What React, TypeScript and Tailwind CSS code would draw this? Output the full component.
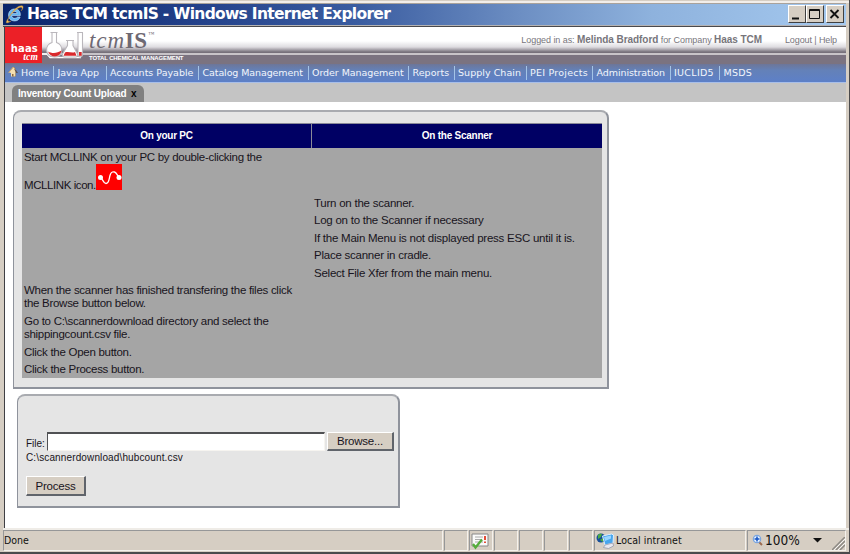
import React from "react";

const SANS = "font-['Liberation_Sans',Arial,sans-serif]";
const VERDANA = "font-['DejaVu_Sans',Verdana,sans-serif]";
const TAHOMA = "font-['DejaVu_Sans_Condensed','DejaVu_Sans',Tahoma,sans-serif]";

function IeLogo() {
  return (
    <svg width="19" height="19" viewBox="0 0 19 19" className="shrink-0">
      <path d="M15.300 10.600H6.700c.1 1.700 1.300 2.700 3 2.700 1.300 0 2.200-.5 2.700-1.300h2.700c-.8 2.500-2.800 3.900-5.500 3.900-3.700 0-6-2.300-6-5.900s2.500-6 6-6c3.900 0 6 2.500 5.700 6.600zM6.800 8.400h5.300c-.2-1.300-1.100-2-2.500-2s-2.500.7-2.800 2z" fill="#63b5f3" stroke="#d5efff" strokeWidth=".6" />
      <path d="M4 12.200C-.2 18 .5 19.400 6 16.200 1.800 17.200 2.400 14.800 5 11 9 5.200 15 1.200 16.700 2.500c.9.7.3 2-.5 3.400C18.600 2.800 18.800.8 16.500.7 13 .6 7.100 5.500 4 12.200z" fill="#f3bc56" stroke="#c48f3a" strokeWidth=".4" />
    </svg>
  );
}

function Flasks() {
  return (
    <svg width="42" height="35" viewBox="0 0 42 35" className="shrink-0">
      <path d="M0 27h5l3 3.500h31" stroke="#fff" strokeWidth="1.500" fill="none" />
      <g fill="#fff" stroke="#bab7bc" strokeWidth="1.100">
        <path d="M8.500 5.500h7M10 6v9.500C2 18 3 30 12.300 30S22 18 14.500 15.500V6" />
        <path d="M24 13.500h8M25.500 14v4.500L20.500 27q-.5 3 2 3h11q2.500 0 2-3L31 18.500V14" />
        <path d="M35 5.500h6M36 6v21q0 3 2.200 3t2.300-3V6" />
      </g>
      <path d="M6 24.500c4 2.200 9 2 13.500-1-1 7.500-11 8-13.500 1z" fill="#d9292c" />
      <path d="M23 25.500c3-1.500 7 1 10-.5l1.500 3.800H21.500z" fill="#d9292c" />
      <path d="M37 25h2.700v3.800H37z" fill="#d9292c" />
    </svg>
  );
}

function HomeIcon() {
  return (
    <svg width="11" height="12" viewBox="0 0 11 12" className="shrink-0">
      <path d="M6.500 1.500 10 7H8v3.500H5V7z" fill="#5b5150" />
      <path d="M1 6.500 5.500 1 7.500 6v4.500H3V7z" fill="#f4dfaf" />
      <path d="M.5 6.800 5.300 1l2 2.500" stroke="#d8a964" fill="none" />
      <path d="M4 8h1.500v2.500H4z" fill="#8a6845" />
    </svg>
  );
}

function LinkIcon() {
  return (
    <svg width="26" height="26" viewBox="0 0 26 26" className="absolute left-[74px] top-[16px]">
      <path fill="#f00" d="M0 0h26v26H0z" />
      <path d="M4 13.500C7 14 7 19.500 10 19.500S13 15 14 11.500 16 7.500 18.500 8 21 12 23 13" fill="none" stroke="#fff" strokeWidth="1.300" />
      <circle cx="4.500" cy="13.500" r="2.500" fill="#fff" />
      <circle cx="23" cy="13.500" r="2.500" fill="#fff" />
    </svg>
  );
}

function CaptionButton({ children, cls }: { children: React.ReactNode; cls: string }) {
  return (
    <div className={`h-[18px] border border-t-white border-l-white border-r-[#404040] border-b-[#404040] bg-[#d6cec3] ${cls}`}>
      <svg width="15" height="16" viewBox="0 0 15 16">{children}</svg>
    </div>
  );
}

const menu = [
  { label: "Java App", cls: "w-[52.5px] tracking-[0px]" },
  { label: "Accounts Payable", cls: "w-[92.500px] tracking-[0px]" },
  { label: "Catalog Management", cls: "w-[109.500px] tracking-[-0.1px]" },
  { label: "Order Management", cls: "w-[100.500px] tracking-[-0.06px]" },
  { label: "Reports", cls: "w-[45.500px] tracking-[0.05px]" },
  { label: "Supply Chain", cls: "w-[72px] tracking-[0.04px]" },
  { label: "PEI Projects", cls: "w-[66.500px] tracking-[0.25px]" },
  { label: "Administration", cls: "w-[77.500px] tracking-[-0.08px]" },
  { label: "IUCLID5", cls: "w-[49.500px] tracking-[0.3px]" },
  { label: "MSDS", cls: "w-[50px] tracking-[0.2px]" },
];

const scannerSteps = [
  "Turn on the scanner.",
  "Log on to the Scanner if necessary",
  "If the Main Menu is not displayed press ESC until it is.",
  "Place scanner in cradle.",
  "Select File Xfer from the main menu.",
];

function Button({ label, cls }: { label: string; cls: string }) {
  return (
    <button className={`flex items-center justify-center border border-t-white border-l-white border-r-2 border-b-2 border-r-[#60646b] border-b-[#60646b] bg-[#d6cec3] text-[11.500px] leading-[14px] tracking-[-0.2px] text-[#181420] ${cls}`}>
      {label}
    </button>
  );
}

function Pane({ cls, children }: { cls: string; children?: React.ReactNode }) {
  return (
    <div className={`flex h-[21px] shrink-0 items-center border border-t-[#969798] border-l-[#969798] border-r-[#f4f1ec] border-b-[#f4f1ec] ${cls}`}>
      {children}
    </div>
  );
}

export default function App() {
  return (
    <div className={`flex h-[554px] w-[850px] flex-col overflow-hidden border-r border-b-2 border-[#4a4a4c] bg-[#d6cec3] whitespace-nowrap ${SANS}`}>
      <div className="h-[3px] shrink-0 border-t border-[#d6cec3] bg-[#f2eeea]" />
      <div className="ml-[3px] mr-[3px] flex h-[22px] shrink-0 items-center border-t border-[#a9a29b] bg-[linear-gradient(90deg,#0a246a_0%,#23418a_23%,#3a5ca0_42%,#6e90c4_62%,#8eb2dd_77%,#a5c9ef_100%)] pr-[2px] pl-[2px]">
        <IeLogo />
        <h1 className={`ml-[3px] flex-1 pb-px text-[15.500px] font-bold leading-[20px] text-white tracking-[-0.7px] ${VERDANA}`}>
          Haas TCM tcmIS - Windows Internet Explorer
        </h1>
        <div className="flex pb-px">
          <CaptionButton cls="w-[18px]"><path d="M3 12.500h7" stroke="#111" strokeWidth="2" /></CaptionButton>
          <CaptionButton cls="w-[18px]"><path d="M2.500 3.500h10v9h-10zM2 4.500h11" stroke="#111" fill="none" /></CaptionButton>
          <CaptionButton cls="ml-[2px] w-[18px]"><path d="m3.500 4 8 8m0-8-8 8" stroke="#111" strokeWidth="1.800" /></CaptionButton>
        </div>
      </div>
      <div className="ml-[3px] mr-[3px] h-[2px] shrink-0 border-t border-[#b4b3b4] bg-[#49494d]" />
      <div className="flex min-h-0 flex-1 flex-col border-l-4 border-r-3 border-[#d6cec3]">
        <div className="flex min-h-0 flex-1 flex-col border-l border-[#404044] bg-white">
          <header className="flex h-[37px] shrink-0 bg-[linear-gradient(180deg,#fff_0px,#fff_14px,#dedce0_20px,#77717b_25px,#77717b_26px,#c8c4c8_26px,#c8c4c8_28px,#7b7380_28px)]">
            <div className="flex h-[36px] w-[37px] shrink-0 flex-col items-end bg-[#ec2027] pt-[17px] pr-[4px] text-white">
              <span className={`text-[10px] font-bold leading-[10px] tracking-[0.2px] ${VERDANA}`}>haas</span>
              <span className="-mt-px font-['Liberation_Serif',serif] text-[9.500px] font-bold italic leading-[9px] tracking-[0.2px]">tcm</span>
            </div>
            <Flasks />
            <div className="ml-[5px] w-[100px]">
              <div className="flex h-[26px] items-start font-['Liberation_Serif',serif] text-[23px] leading-[28px] text-[#6e6973]">
                <span className="w-[36px] italic tracking-[0.9px]">tcm</span>
                <b className="tracking-[0.3px]">IS</b>
                <span className="ml-px text-[6px] leading-[14px]">™</span>
              </div>
              <div className="text-[6px] font-bold leading-[10px] text-white tracking-[-0.14px]">TOTAL CHEMICAL MANAGEMENT</div>
            </div>
            <div className="ml-auto flex pr-[9px] text-[9px] leading-[26px] text-[#77757b]">
              <span className="tracking-[-0.06px]">Logged in as: <b className="text-[10px]">Melinda Bradford</b> for Company <b className="text-[10px]">Haas TCM</b></span>
              <span className="ml-[23px] tracking-[-0.1px]">Logout | Help</span>
            </div>
          </header>
          <nav className={`flex h-[19px] shrink-0 items-center border-b border-[#a9bfe8] bg-[linear-gradient(180deg,#6d7698_0%,#6481b8_35%,#5d80c8_100%)] pl-[3px] text-[9.500px] text-[#f1f5fd] ${VERDANA}`}>
            <div className="flex h-[14px] w-[45px] gap-[2px] leading-[13px]">
              <HomeIcon />
              <span>Home</span>
            </div>
            {menu.map((m) => (
              <div key={m.label} className={`h-[14px] shrink-0 border-l border-[#a4c4e7] pl-[3.500px] leading-[13px] ${m.cls}`}>{m.label}</div>
            ))}
          </nav>
          <div className="flex h-[19px] shrink-0 items-end bg-[#c4c4c4] pl-[7px]">
            <div className="flex h-[17px] w-[132px] items-center rounded-t-[6px] bg-[#808080] pl-[6px] text-[10px] font-bold text-white">
              <span className="w-[113px] tracking-[-0.23px]">Inventory Count Upload</span>
              <span className="text-black">x</span>
            </div>
          </div>
          <main className="flex flex-1 flex-col items-start pt-[8px] pl-[8px]">
            <section className="h-[279px] w-[596px] rounded-t-[8px] border border-t-2 border-r-2 border-b-2 border-[#8f939c] border-t-[#a9abb0] bg-[#e5e5e5] pt-[11px] pl-[8px]">
              <div className="grid w-[580px] grid-cols-[289px_291px] bg-[#a5a5a5] text-[11.500px] leading-[13px] text-[#181420]">
                <div className="flex h-[25px] items-center justify-center border-t border-[#8a8a98] bg-[#000064] pb-[2px] text-[10px] font-bold tracking-[-0.25px] text-white">On your PC</div>
                <div className="flex h-[25px] items-center justify-center border-t border-l border-[#8a8a98] bg-[#000064] pb-[2px] text-[10px] font-bold tracking-[-0.25px] text-white">On the Scanner</div>
                <div className="relative h-[46px] pt-[3px] pl-[2px] tracking-[-0.3px]">
                  <p>Start MCLLINK on your PC by double-clicking the</p>
                  <p className="mt-[15px] tracking-[-0.42px]">MCLLINK icon.</p>
                  <LinkIcon />
                </div>
                <div />
                <div className="col-start-2 h-[88px] pt-[3px] pl-[3px] tracking-[-0.24px]">
                  {scannerSteps.map((s) => <p key={s} className="h-[17.400px]">{s}</p>)}
                </div>
                <div className="h-[96px] pt-[2px] pl-[2px] tracking-[-0.28px]">
                  <p className="h-[30.500px]">When the scanner has finished transfering the files click<br />the Browse button below.</p>
                  <p className="h-[31px]">Go to C:\scannerdownload directory and select the<br />shippingcount.csv file.</p>
                  <p className="h-[17.500px]">Click the Open button.</p>
                  <p>Click the Process button.</p>
                </div>
                <div />
              </div>
            </section>
            <section className="mt-[5px] ml-[4px] h-[114px] w-[383px] rounded-t-[8px] border border-t-2 border-r-2 border-b-2 border-[#8f939c] border-t-[#a9abb0] bg-[#e5e5e5] pt-[36px] pl-[8px] text-[10px] text-[#181420]">
              <div className="flex items-start">
                <label className="w-[21px] pt-[5px] leading-[14px]">File:</label>
                <input className="h-[19px] w-[278px] border border-t-2 border-t-[#505154] border-l-[#505154] border-r-[#f6f4f0] border-b-[#f6f4f0] bg-white" readOnly />
                <Button label="Browse..." cls="ml-[2px] h-[19px] w-[67px]" />
              </div>
              <p className="leading-[14px] tracking-[0.13px]">C:\scannerdownload\hubcount.csv</p>
              <Button label="Process" cls="mt-[11px] h-[20px] w-[60px]" />
            </section>
          </main>
        </div>
      </div>
      <footer className={`ml-[3px] flex h-[24px] shrink-0 items-start border-t-2 border-[#efece7] pr-[3px] text-[10.500px] text-[#111] ${TAHOMA}`}>
        <Pane cls="w-[440px]">Done</Pane>
        <Pane cls="ml-px w-[24px]" />
        <Pane cls="ml-px w-[24px] pl-[1px]">
          <svg width="18" height="18" viewBox="0 0 18 18">
            <path d="M1 2h16v12H1z" fill="#fafafa" stroke="#888" />
            <path d="M4 5h8M4 7.500h7M4 10h8" stroke="#aaa" />
            <path d="M14 4v4m0 1.500V11" stroke="#df3a22" strokeWidth="1.800" />
            <path d="m2 12 2.500 3.500L11 7.500" fill="none" stroke="#55ad3b" strokeWidth="2.300" />
          </svg>
        </Pane>
        <Pane cls="ml-px w-[24px]" />
        <Pane cls="ml-px w-[24px]" />
        <Pane cls="ml-px w-[24px]" />
        <Pane cls="ml-px w-[24px]" />
        <Pane cls="ml-px w-[152px] pl-[1px] tracking-[0.05px]">
          <svg width="19" height="18" viewBox="0 0 19 18" className="mr-px shrink-0">
            <circle cx="5" cy="6" r="4.500" fill="#164f9a" />
            <path d="M2 3q2-2 4-1L5 5 2 7zM4 8l3-2v4z" fill="#4baa44" />
            <path d="m6.500 4 9-2 2 1-.5 8-8 2z" fill="#48a6ed" stroke="#dceeff" />
            <path d="m9 13 8-2 .5 3-5 2.500-5-1z" fill="#e9e9f0" stroke="#8c91a5" strokeWidth=".7" />
            <path d="m8 5 7-1.500v3L9 9z" fill="#99d6ff" />
          </svg>
          Local intranet
        </Pane>
        <Pane cls="ml-px flex-1 pl-[4px]">
          <svg width="12" height="13" viewBox="0 0 12 13" className="mr-px shrink-0">
            <path d="m7 8 3 3" stroke="#9b6b50" strokeWidth="2" />
            <circle cx="5" cy="5" r="3.700" fill="#e7f3ff" stroke="#79a5df" strokeWidth="1.200" />
            <path d="M5 2.500v5M2.500 5h5" stroke="#1553c4" strokeWidth="1.500" />
          </svg>
          <span className="text-[13.500px]">100%</span>
          <svg width="9" height="5" viewBox="0 0 9 5" className="ml-[13px]"><path d="M0 0h9L4.500 4.500z" fill="#111" /></svg>
          <svg width="13" height="13" viewBox="0 0 13 13" className="mt-[6px] ml-auto"><path d="M0 13 13 0M4 13l9-9M8 13l5-5" stroke="#8d8a84" strokeWidth="1.500" /><path d="m2 13 11-11M6 13l7-7" stroke="#fff" strokeWidth=".8" /></svg>
        </Pane>
      </footer>
    </div>
  );
}
